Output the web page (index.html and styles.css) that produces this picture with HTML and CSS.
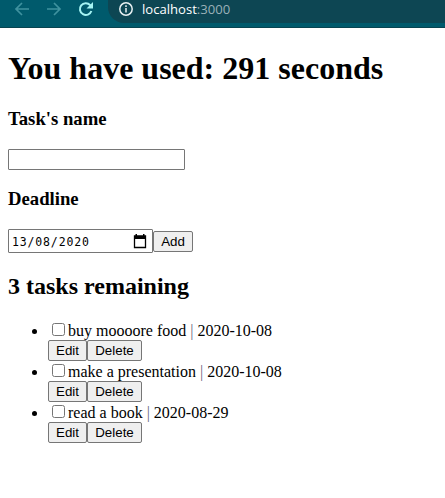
FILE: index.html
```html
<!DOCTYPE html>
<html lang="en">
<head>
<meta charset="utf-8">
<title>Tasks</title>
<link rel="stylesheet" href="styles.css">
</head>
<body>
<header class="toolbar">
  <svg class="nav" viewBox="0 0 16 16"><path d="M15 8H2M8 2L2 8l6 6"/></svg>
  <svg class="nav" viewBox="0 0 16 16"><path d="M1 8h13M8 2l6 6-6 6"/></svg>
  <svg class="nav reload" viewBox="0 0 16 16"><path d="M13.400 10A5.900 5.900 0 1 1 12.200 4.100L13 5"/><path class="tip" d="M15 1v6.500H8.500z"/></svg>
  <div class="address">
    <svg class="info" viewBox="0 0 14 14"><circle cx="7" cy="7" r="6.200"/><path d="M7 6v4.500M7 3.300v1.600"/></svg>
    <span class="url">localhost<span class="port">:3000</span></span>
  </div>
</header>
<main class="page">
  <h1>You have used: 291 seconds</h1>
  <h3>Task's name</h3>
  <input class="name" type="text" aria-label="Task's name">
  <h3 class="deadline">Deadline</h3>
  <div class="row">
    <div class="date"><span>13/08/2020</span>
      <svg class="cal" viewBox="0 0 14 15"><path d="M1.500 2h11v11.500h-11z" fill="none" stroke="#000" stroke-width="1.300"/><path d="M1 2h12v3H1zM2.500 0H4v3H2.500zM10 0h1.500v3H10z"/></svg>
    </div><button class="add">Add</button>
  </div>
  <h2>3 tasks remaining</h2>
  <ul class="tasks">
    <li><div class="task"><input type="checkbox" aria-label="Done"><span>buy moooore food <span class="bar">|</span> 2020-10-08</span></div><div class="actions"><button class="edit">Edit</button><button class="delete">Delete</button></div></li>
    <li><div class="task"><input type="checkbox" aria-label="Done"><span>make a presentation <span class="bar">|</span> 2020-10-08</span></div><div class="actions"><button class="edit">Edit</button><button class="delete">Delete</button></div></li>
    <li><div class="task"><input type="checkbox" aria-label="Done"><span>read a book <span class="bar">|</span> 2020-08-29</span></div><div class="actions"><button class="edit">Edit</button><button class="delete">Delete</button></div></li>
  </ul>
</main>
</body>
</html>
```
FILE: styles.css
```css
* { box-sizing: border-box; }
body { margin: 0; background: #fff; color: #000; font: 16px "Liberation Serif", serif; overflow: hidden; }
.toolbar { height: 28px; background: #005a6c; border-bottom: 1px solid #084450; display: flex; align-items: flex-start; padding-left: 14px; overflow: hidden; }
.nav { width: 16px; height: 16px; margin: 1px 16px 0 0; fill: none; stroke: #3f929f; stroke-width: 1.700; flex: none; }
.reload { stroke: #a5f4f3; stroke-width: 2; margin-right: 14px; }
.tip { fill: #a5f4f3; stroke: none; }
.address { flex: 1; height: 23px; background: #0d4653; border-radius: 0 0 0 16px; display: flex; padding: 2px 0 0 11px; }
.info { width: 14px; height: 14px; fill: none; stroke: #e8f0f2; stroke-width: 1.500; margin-right: 9px; }
.url { font: 13.100px/15px "Open Sans", sans-serif; color: #fff; }
.port { color: #9ab1b8; }
.page { padding: 0 8px; }
h1 { font-size: 32px; line-height: 37px; margin: 0; padding-top: 22px; }
h3 { font-size: 18.720px; line-height: 22px; margin: 21px 0 19px; }
.name { display: block; width: 177px; height: 21px; border: 1px solid #767676; border-radius: 1px; padding: 0; }
.deadline { margin: 18px 0 19px; }
.row { display: flex; align-items: center; height: 24px; }
.date { width: 145px; height: 24px; border: 1px solid #767676; border-radius: 1px; display: flex; align-items: center; justify-content: space-between; padding: 0 5px 0 3px; font: 11.500px "DejaVu Sans Mono", monospace; letter-spacing: .85px; }
.date span { padding-top: 1px; }
.cal { width: 14px; height: 15px; }
button { font: 13.333px "Liberation Sans", sans-serif; height: 21px; border: 1px solid #767676; border-radius: 2px; background: #efefef; color: #000; padding: 0; }
.add { width: 40px; }
.edit { width: 39px; }
.delete { width: 55px; }
h2 { font-size: 24px; line-height: 27px; margin: 20px 0; }
.tasks { margin: 0; padding-left: 40px; }
.tasks li { height: 41px; line-height: 22px; }
.task { height: 20px; display: flex; }
.task input { width: 13px; height: 13px; margin: 3px 3px 0 4px; }
.bar { color: #66667c; }
.actions { display: flex; }
```
